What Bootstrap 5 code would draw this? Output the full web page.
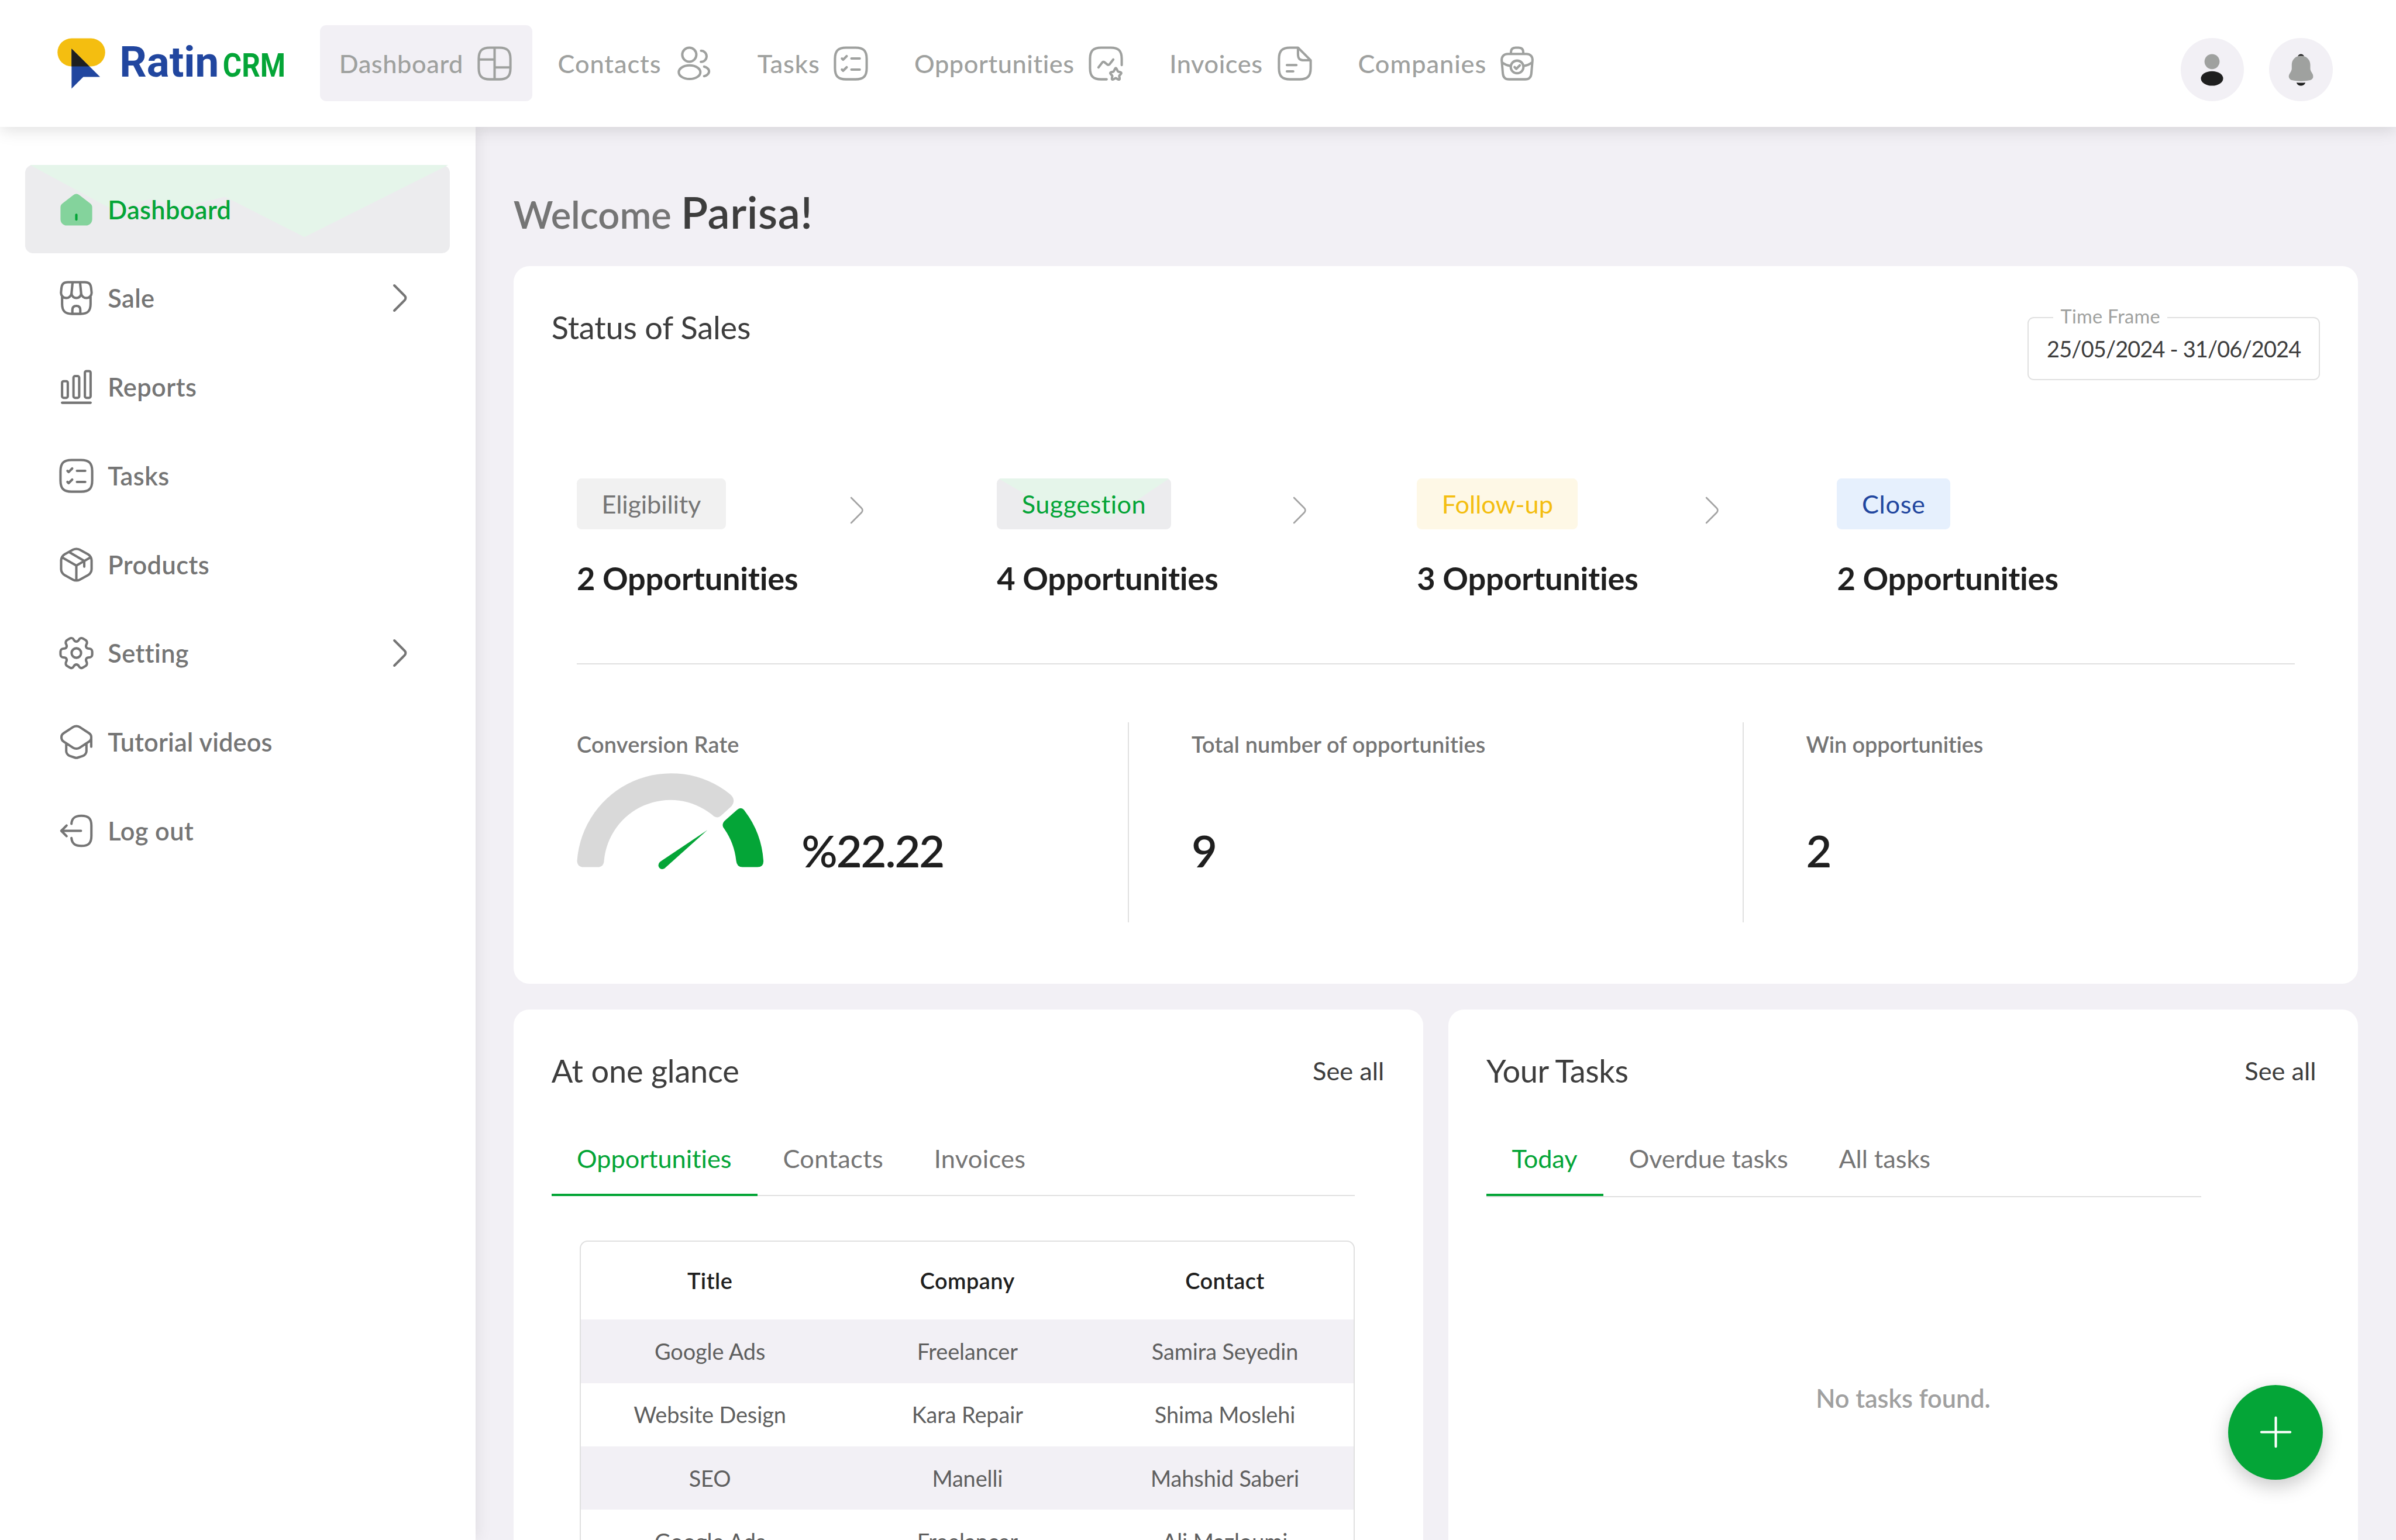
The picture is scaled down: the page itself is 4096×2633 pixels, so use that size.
<!DOCTYPE html>
<html lang="en">
<head>
<meta charset="utf-8">
<title>Ratin CRM</title>
<meta name="viewport" content="width=device-width, initial-scale=1">
<link rel="stylesheet" href="https://cdn.jsdelivr.net/npm/bootstrap@5.3.0/dist/css/bootstrap.min.css">
<style>
/* One design unit is 1/1512 of the window width; 1rem is 16 units. */
:root { --u: calc(100vw / 1512); --green: #04a537; --line: #e0e0e0; --page: #f2f0f5; --grey: #757575; --soft: #9fa19f; --ink: #3d3d3d; --dark: #1f1f1f; font-size: calc(100vw / 94.5); }
body { font-family: Lato, sans-serif; font-variant-ligatures: none; background: var(--page); height: 100vh; overflow: hidden; color: var(--ink); line-height: 1.5; }
svg { display: block; flex: none; }
.ico { width: 1.5rem; height: 1.5rem; fill: none; stroke: currentColor; stroke-width: 1.5; stroke-linecap: round; stroke-linejoin: round; }
.ico-solid { stroke: none; }

.topbar { height: calc(80 * var(--u)); background: #fff; box-shadow: 0 calc(2 * var(--u)) calc(10 * var(--u)) rgba(0,0,0,.13); z-index: 5; padding-left: calc(36 * var(--u)); padding-right: calc(40 * var(--u)); }
.brand { width: calc(166 * var(--u)); height: calc(80 * var(--u)); }
.brand text { font-family: Roboto, sans-serif; font-weight: 700; }
.topnav { gap: calc(4 * var(--u)); }
.topnav .nav-link { height: calc(48 * var(--u)); padding: 0 calc(12 * var(--u)); color: var(--soft); border-radius: calc(4 * var(--u)); letter-spacing: .013em; font-weight: 500; white-space: nowrap; }
.topnav .nav-link.active { background: var(--page); }
.w-dash { width: calc(134 * var(--u)); }
.w-cont { width: calc(122 * var(--u)); }
.w-task { width: calc(95 * var(--u)); }
.w-opp { width: calc(157 * var(--u)); }
.w-inv { width: calc(115 * var(--u)); }
.w-comp { width: calc(136.4 * var(--u)); }
.topnav .nav-link.w-cont, .topnav .nav-link.w-task, .topnav .nav-link.w-comp { letter-spacing: .021em; }
.round-btn { width: calc(40 * var(--u)); height: calc(40 * var(--u)); background: var(--page); margin-top: calc(8 * var(--u)); }

.side { width: calc(300 * var(--u)); background: #fff; padding: calc(24 * var(--u)) calc(16 * var(--u)); box-shadow: calc(1 * var(--u)) 0 calc(9 * var(--u)) rgba(0,0,0,.08); z-index: 2; }
.side .nav-link { height: calc(56 * var(--u)); padding: calc(.5 * var(--u)) calc(20 * var(--u)) 0; color: #757575; font-weight: 600; border-radius: calc(5 * var(--u)); letter-spacing: .01em; isolation: isolate; }
.side .nav-link.active { color: var(--green); background: #ececee; letter-spacing: .008em; }
.side .peaks { left: 0; top: 0; width: 100%; height: 100%; z-index: -1; fill: #e5f5ea; }
.side .lbl { margin-left: calc(8 * var(--u)); }
.side .lbl-long { letter-spacing: .003em; }

.page { padding: 0 calc(24 * var(--u)); height: calc(100vh - 80 * var(--u)); overflow: hidden; }
.hello { height: calc(88 * var(--u)); padding-top: calc(35.5 * var(--u)); line-height: calc(36 * var(--u)); font-size: calc(24 * var(--u)); font-weight: 600; color: var(--grey); letter-spacing: -.001em; }
.hello b { font-size: calc(28 * var(--u)); font-weight: 600; color: var(--ink); letter-spacing: .007em; }
.panel { background: #fff; border-radius: calc(10 * var(--u)); border: 0; padding: calc(24 * var(--u)); }
.panel-title { font-size: calc(20 * var(--u)); line-height: calc(28 * var(--u)); font-weight: 400; color: var(--ink); padding-top: calc(.8 * var(--u)); margin-bottom: calc(-.8 * var(--u)); letter-spacing: -.004em; }
.panel-title-r { letter-spacing: -.008em; }
.sales { height: calc(453 * var(--u)); }
.frame { width: calc(184.4 * var(--u)); height: calc(40 * var(--u)); margin-top: calc(8 * var(--u)); border: var(--u) solid var(--line); border-radius: calc(4 * var(--u)); font-size: calc(14 * var(--u)); letter-spacing: -.0225em; white-space: nowrap; padding-top: calc(1 * var(--u)); }
.frame .cap { left: calc(15.5 * var(--u)); top: calc(-9 * var(--u)); padding: 0 calc(4.5 * var(--u)); background: #fff; color: var(--soft); font-size: calc(12 * var(--u)); line-height: calc(16 * var(--u)); letter-spacing: .008em; }
.funnel { margin: calc(62 * var(--u)) calc(16 * var(--u)) 0; height: calc(76 * var(--u)); }
.stage { width: calc(265.1 * var(--u)); }
.pill { height: calc(32 * var(--u)); line-height: calc(32.4 * var(--u)); padding: 0 calc(15.7 * var(--u)); border-radius: calc(3 * var(--u)); isolation: isolate; display: inline-block; vertical-align: top; }
.pill-e { background: #f1f1f1; color: var(--grey); letter-spacing: -.004em; }
.pill-s { background: #ececee; color: var(--green); letter-spacing: .01em; }
.pill-f { background: #fef8e6; color: #f4be10; letter-spacing: -.001em; }
.pill-c { background: #e6f0fd; color: #21469f; letter-spacing: .015em; }
.pill svg { left: 0; top: 0; width: 100%; height: 100%; z-index: -1; fill: #e5f5ea; }
.stage-n { font-size: calc(20 * var(--u)); line-height: calc(28 * var(--u)); font-weight: 700; color: var(--dark); margin-top: calc(17 * var(--u)); letter-spacing: -.005em; white-space: nowrap; }
.step { stroke-width: 1; color: #a3a3a3; margin-top: calc(8 * var(--u)); }
.step-1 { margin-right: calc(77 * var(--u)); }
.step-2 { margin-right: calc(62.5 * var(--u)); }
.step-3 { margin-right: calc(67.4 * var(--u)); }
.rule { height: var(--u); background: var(--line); margin: calc(40.5 * var(--u)) calc(16 * var(--u)) calc(36.5 * var(--u)); }
.stats { margin: 0 calc(16 * var(--u)); height: calc(126 * var(--u)); }
.stat { flex: none; width: calc(387.8 * var(--u)); padding-top: calc(4 * var(--u)); padding-left: calc(39.4 * var(--u)); border-left: var(--u) solid var(--line); }
.stat-first { width: calc(347.8 * var(--u)); padding-left: 0; border-left: 0; }
.stat-last { width: calc(348 * var(--u)); }
.stat-l { font-size: calc(14 * var(--u)); line-height: calc(20 * var(--u)); font-weight: 600; color: var(--grey); letter-spacing: .004em; white-space: nowrap; }
.stat-last .stat-l { letter-spacing: -.004em; }
.stat-v { font-size: calc(28 * var(--u)); line-height: calc(36 * var(--u)); font-weight: 600; color: var(--dark); padding-top: calc(38.8 * var(--u)); }
.rate { margin-left: calc(22.8 * var(--u)); letter-spacing: -.027em; }
.gauge { width: calc(119 * var(--u)); height: calc(62 * var(--u)); margin-top: calc(7.2 * var(--u)); }

.duo { gap: calc(16 * var(--u)); margin-top: calc(16 * var(--u)); }
.duo .panel { flex: 1 1 0; height: calc(335 * var(--u)); overflow: hidden; border-bottom-left-radius: 0; border-bottom-right-radius: 0; padding-bottom: 0; }
.see { color: var(--ink); text-decoration: none; margin-top: calc(2.9 * var(--u)); margin-bottom: calc(-1 * var(--u)); margin-right: calc(.5 * var(--u)); line-height: calc(24 * var(--u)); }
.see-r { margin-right: calc(2.4 * var(--u)); }
.tabs { width: calc(507 * var(--u)); margin-top: calc(17.8 * var(--u)); border-bottom: var(--u) solid var(--line); }
.tabs .nav-link { padding: calc(12.3 * var(--u)) calc(16 * var(--u)) calc(10.4 * var(--u)); line-height: calc(24 * var(--u)); color: var(--grey); border-bottom: calc(1.5 * var(--u)) solid transparent; border-radius: 0; letter-spacing: .007em; margin-bottom: calc(-1 * var(--u)); white-space: nowrap; }
.tabs .nav-link.active { color: var(--green); border-color: var(--green); letter-spacing: -.001em; padding-right: calc(16.5 * var(--u)); }
.tabs-low { width: calc(451 * var(--u)); }
.tabs-low .nav-link { margin-bottom: 0; letter-spacing: -.002em; }
.tabs-low .nav-link.active { padding-right: calc(16.5 * var(--u)); }
.deals { width: calc(489 * var(--u)); margin: calc(28.4 * var(--u)) 0 0 calc(18 * var(--u)); border: var(--u) solid var(--line); border-radius: calc(5 * var(--u)); overflow: hidden; }
.deals table { table-layout: fixed; font-size: calc(14 * var(--u)); line-height: calc(20 * var(--u)); text-align: center; white-space: nowrap; }
.deals th { height: calc(49 * var(--u)); font-weight: 600; color: var(--dark); letter-spacing: .012em; padding: 0; vertical-align: middle; }
.deals td { height: calc(40 * var(--u)); color: #5f5f5f; padding: calc(.6 * var(--u)) 0 0; letter-spacing: -.003em; vertical-align: middle; }
.deals .tint td { background: var(--page); }
.empty { margin-top: calc(114.8 * var(--u)); color: #a0a0a0; font-weight: 600; letter-spacing: -.002em; }
.fab { right: calc(46 * var(--u)); bottom: calc(38 * var(--u)); width: calc(60 * var(--u)); height: calc(60 * var(--u)); background: var(--green); color: #fff; box-shadow: 0 calc(4 * var(--u)) calc(12 * var(--u)) rgba(0,0,0,.22); z-index: 6; }
</style>
</head>
<body class="d-flex flex-column">

<header class="topbar d-flex align-items-center position-relative flex-shrink-0">
  <svg class="brand" viewBox="36 0 166 80" role="img" aria-label="Ratin CRM">
    <rect x="36.1" y="24.2" width="30.1" height="17.7" rx="8.9" fill="#f4be10"/>
    <path d="M45 30.7L63 48.5H52.4L45 55.9Z" fill="#21469f"/>
    <path d="M45 30.7L56.2 41.9H45Z" fill="#1f1f1f"/>
    <text x="75.2" y="48.5" font-size="26.4" textLength="62.8" lengthAdjust="spacingAndGlyphs" fill="#21469f">Ratin</text>
    <text x="140.4" y="48.5" font-size="20.5" textLength="39.6" lengthAdjust="spacingAndGlyphs" fill="#04a537">CRM</text>
  </svg>
  <nav class="nav topnav flex-nowrap">
    <a class="nav-link active w-dash d-flex align-items-center justify-content-between" href="#"><span>Dashboard</span>
      <svg class="ico" viewBox="0 0 24 24"><path d="M9 22H15C20 22 22 20 22 15V9C22 4 20 2 15 2H9C4 2 2 4 2 9V15C2 20 4 22 9 22ZM12 2V22M2 9.5H12M12 14.5H22"/></svg></a>
    <a class="nav-link w-cont d-flex align-items-center justify-content-between" href="#"><span>Contacts</span>
      <svg class="ico" viewBox="0 0 24 24"><path d="M9.16 10.87C9.06 10.86 8.94 10.86 8.83 10.87C6.45 10.79 4.56 8.84 4.56 6.44C4.56 3.99 6.54 2 9 2C11.45 2 13.44 3.99 13.44 6.44C13.43 8.84 11.54 10.79 9.16 10.87ZM16.41 4C18.35 4 19.91 5.57 19.91 7.5C19.91 9.39 18.41 10.93 16.54 11C16.46 10.99 16.37 10.99 16.28 11M4.16 14.56C1.74 16.18 1.74 18.82 4.16 20.43C6.91 22.27 11.42 22.27 14.17 20.43C16.59 18.81 16.59 16.17 14.17 14.56C11.43 12.73 6.92 12.73 4.16 14.56ZM18.34 20C19.06 19.85 19.74 19.56 20.3 19.13C21.86 17.96 21.86 16.03 20.3 14.86C19.75 14.44 19.08 14.16 18.37 14"/></svg></a>
    <a class="nav-link w-task d-flex align-items-center justify-content-between" href="#"><span>Tasks</span>
      <svg class="ico" viewBox="0 0 24 24"><path d="M9 22H15C20 22 22 20 22 15V9C22 4 20 2 15 2H9C4 2 2 4 2 9V15C2 20 4 22 9 22ZM12.37 8.88H17.62M6.38 8.88L7.13 9.63L9.38 7.38M12.37 15.88H17.62M6.38 15.88L7.13 16.63L9.38 14.38"/></svg></a>
    <a class="nav-link w-opp d-flex align-items-center justify-content-between" href="#"><span>Opportunities</span>
      <svg class="ico" viewBox="0 0 24 24"><path d="M22 13V9C22 4 20 2 15 2H9C4 2 2 4 2 9V15C2 20 4 22 9 22H12.5M7.33 14.49L9.71 11.4C10.05 10.96 10.68 10.88 11.12 11.22L12.95 12.66C13.39 13 14.02 12.92 14.36 12.49L16.67 9.51M18.78 15.44L19.48 16.85C19.58 17.04 19.83 17.23 20.04 17.26L21 17.42C21.8 17.56 22 18.16 21.4 18.75L20.6 19.55C20.47 19.68 20.39 19.95 20.43 20.13L20.66 21.1C20.88 22.05 20.37 22.42 19.53 21.92L18.6 21.37C18.4 21.27 18.07 21.27 17.87 21.37L16.97 21.92C16.12 22.42 15.6 22.05 15.82 21.1L16.05 20.13C16.1 19.95 16.02 19.68 15.89 19.55L15.09 18.75C14.5 18.16 14.69 17.56 15.51 17.42L16.5 17.26C16.68 17.23 16.92 17.04 17.01 16.85L17.72 15.44C18.05 14.74 18.45 14.74 18.78 15.44Z"/></svg></a>
    <a class="nav-link w-inv d-flex align-items-center justify-content-between" href="#"><span>Invoices</span>
      <svg class="ico" viewBox="0 0 24 24"><path d="M22 10V15C22 20 20 22 15 22H9C4 22 2 20 2 15V9C2 4 4 2 9 2H14M22 10H18C15 10 14 9 14 6V2L22 10ZM7 13H13M7 17H11"/></svg></a>
    <a class="nav-link w-comp d-flex align-items-center justify-content-between" href="#"><span>Companies</span>
      <svg class="ico" viewBox="0 0 24 24"><path d="M6.1 6H17.9C20.4 6 21.9 7.7 21.7 10.2L21 18.2C20.8 20.7 19.6 22 17.1 22H6.9C4.4 22 3.2 20.7 3 18.2L2.3 10.2C2.1 7.7 3.6 6 6.1 6ZM8.1 6V5C8.1 3 9 2 11 2H13C15 2 15.9 3 15.9 5V6M2.6 11.4C4.1 12.5 5.8 13.3 7.9 13.6M21.4 11.4C19.9 12.5 18.2 13.3 16.1 13.6M10.4 14.3L11.5 15.4L13.7 13.2"/><circle cx="12" cy="14.2" r="4"/></svg></a>
  </nav>
  <div class="d-flex gap-3 ms-auto">
    <div class="round-btn rounded-circle d-flex align-items-center justify-content-center">
      <svg class="ico ico-solid" viewBox="0 0 24 24"><circle cx="12" cy="6.75" r="4.75" fill="#9fa19f"/><ellipse cx="12" cy="17.4" rx="7" ry="4.6" fill="#1f1f1f"/></svg>
    </div>
    <div class="round-btn rounded-circle d-flex align-items-center justify-content-center">
      <svg class="ico ico-solid" viewBox="0 0 24 24"><path d="M10 3.4C10.3 2.5 11.1 2 12 2S13.7 2.5 14 3.4Z" fill="#1f1f1f"/><path d="M19.3 14.5L18.3 12.8C18.1 12.4 17.9 11.7 17.9 11.3V8.7C17.9 5.5 15.3 3 12 3S6.2 5.5 6.2 8.7V11.3C6.2 11.7 6 12.4 5.8 12.8L4.8 14.5C4.3 15.3 4.2 16.2 4.5 17C4.8 17.7 5.4 18.3 6.2 18.5C8.1 19 10 19.1 12 19.1S15.9 19 17.8 18.5C18.6 18.3 19.3 17.7 19.6 17C19.8 16.1 19.7 15.2 19.3 14.5Z" fill="#9fa19f"/><path d="M14.8 20C14.4 21.2 13.3 22 12 22S9.6 21.2 9.2 20C11 20.2 13 20.2 14.8 20Z" fill="#1f1f1f"/></svg>
    </div>
  </div>
</header>

<div class="d-flex flex-grow-1">
  <aside class="side flex-shrink-0 position-relative">
    <nav class="nav flex-column">
      <a class="nav-link active d-flex align-items-center position-relative" href="#">
        <svg class="peaks position-absolute" viewBox="0 0 268 56" preserveAspectRatio="none"><path d="M3 0L52 26.5C56 28 62 27 66 25L79 21.5L98 27L126 20L176.3 45.5L267 0Z"/></svg>
        <svg class="ico" viewBox="0 0 24 24"><path d="M12 2C11.3 2 10.7 2.3 10.1 2.8L3.4 7.9C2.5 8.6 2 9.4 2 10.4V18C2 20.3 3.7 22 6 22H18C20.3 22 22 20.3 22 18V10.4C22 9.4 21.5 8.6 20.6 7.9L13.9 2.8C13.3 2.3 12.7 2 12 2Z" fill="#84d39c" stroke="none"/><path d="M12 15.2V18.2"/></svg>
        <span class="lbl">Dashboard</span></a>
      <a class="nav-link d-flex align-items-center" href="#">
        <svg class="ico" viewBox="0 0 24 24"><path d="M3.01 11.22V15.71C3.01 20.2 4.81 22 9.3 22H14.69C19.18 22 20.98 20.2 20.98 15.71V11.22M12 12C13.83 12 15.18 10.51 15 8.68L14.34 2H9.67L9 8.68C8.82 10.51 10.17 12 12 12ZM18.31 12C20.33 12 21.81 10.36 21.61 8.35L21.33 5.6C20.97 3 19.97 2 17.35 2H14.3L15 9.01C15.17 10.66 16.66 12 18.31 12ZM5.64 12C7.29 12 8.78 10.66 8.94 9.01L9.64 2H6.59C3.97 2 2.97 3 2.61 5.6L2.34 8.35C2.14 10.36 3.62 12 5.64 12ZM12 17C10.33 17 9.5 17.83 9.5 19.5V22H14.5V19.5C14.5 17.83 13.67 17 12 17Z"/></svg>
        <span class="lbl">Sale</span>
        <svg class="ico ms-auto" viewBox="0 0 24 24"><path d="M8.91 19.92L15.43 13.4C16.2 12.63 16.2 11.37 15.43 10.6L8.91 4.08"/></svg></a>
      <a class="nav-link d-flex align-items-center" href="#">
        <svg class="ico" viewBox="0 0 24 24"><path d="M3 22H21"/><rect x="3" y="8.4" width="3.6" height="10.5" rx="1"/><rect x="10.2" y="5.2" width="3.6" height="13.7" rx="1"/><rect x="17.4" y="2" width="3.6" height="16.9" rx="1"/></svg>
        <span class="lbl">Reports</span></a>
      <a class="nav-link d-flex align-items-center" href="#">
        <svg class="ico" viewBox="0 0 24 24"><path d="M9 22H15C20 22 22 20 22 15V9C22 4 20 2 15 2H9C4 2 2 4 2 9V15C2 20 4 22 9 22ZM12.37 8.88H17.62M6.38 8.88L7.13 9.63L9.38 7.38M12.37 15.88H17.62M6.38 15.88L7.13 16.63L9.38 14.38"/></svg>
        <span class="lbl">Tasks</span></a>
      <a class="nav-link d-flex align-items-center" href="#">
        <svg class="ico" viewBox="0 0 24 24"><path d="M3.17 7.44L12 12.55L20.77 7.47M12 21.61V12.54M9.93 2.48L4.59 5.44C3.38 6.11 2.39 7.79 2.39 9.17V14.82C2.39 16.2 3.38 17.88 4.59 18.55L9.93 21.52C11.07 22.15 12.94 22.15 14.08 21.52L19.42 18.55C20.63 17.88 21.62 16.2 21.62 14.82V9.17C21.62 7.79 20.63 6.11 19.42 5.44L14.08 2.47C12.93 1.84 11.07 1.84 9.93 2.48ZM17 13.24V9.58L7.51 4.1"/></svg>
        <span class="lbl">Products</span></a>
      <a class="nav-link d-flex align-items-center" href="#">
        <svg class="ico" viewBox="0 0 24 24"><circle cx="12" cy="12" r="3"/><path d="M2 12.88V11.12C2 10.08 2.85 9.22 3.9 9.22C5.71 9.22 6.45 7.94 5.54 6.37C5.02 5.47 5.33 4.3 6.24 3.78L7.97 2.79C8.76 2.32 9.78 2.6 10.25 3.39L10.36 3.58C11.26 5.15 12.74 5.15 13.65 3.58L13.76 3.39C14.23 2.6 15.25 2.32 16.04 2.79L17.77 3.78C18.68 4.3 18.99 5.47 18.47 6.37C17.56 7.94 18.3 9.22 20.11 9.22C21.15 9.22 22.01 10.07 22.01 11.12V12.88C22.01 13.92 21.16 14.78 20.11 14.78C18.3 14.78 17.56 16.06 18.47 17.63C18.99 18.54 18.68 19.7 17.77 20.22L16.04 21.21C15.25 21.68 14.23 21.4 13.76 20.61L13.65 20.42C12.75 18.85 11.27 18.85 10.36 20.42L10.25 20.61C9.78 21.4 8.76 21.68 7.97 21.21L6.24 20.22C5.33 19.7 5.02 18.53 5.54 17.63C6.45 16.06 5.71 14.78 3.9 14.78C2.85 14.78 2 13.92 2 12.88Z"/></svg>
        <span class="lbl">Setting</span>
        <svg class="ico ms-auto" viewBox="0 0 24 24"><path d="M8.91 19.92L15.43 13.4C16.2 12.63 16.2 11.37 15.43 10.6L8.91 4.08"/></svg></a>
      <a class="nav-link d-flex align-items-center" href="#">
        <svg class="ico" viewBox="0 0 24 24"><path d="M10.05 2.53L4.03 6.46C2.1 7.72 2.1 10.54 4.03 11.8L10.05 15.73C11.13 16.44 12.91 16.44 13.99 15.73L19.98 11.8C21.9 10.54 21.9 7.73 19.98 6.47L13.99 2.54C12.91 1.82 11.13 1.82 10.05 2.53ZM5.63 13.08L5.62 17.77C5.62 19.04 6.6 20.4 7.8 20.8L10.99 21.86C11.54 22.04 12.45 22.04 13.01 21.86L16.2 20.8C17.4 20.4 18.38 19.04 18.38 17.77V13.13M21.4 15V9"/></svg>
        <span class="lbl lbl-long">Tutorial videos</span></a>
      <a class="nav-link d-flex align-items-center" href="#">
        <svg class="ico" viewBox="0 0 24 24"><path d="M8.9 7.56C9.21 3.96 11.06 2.49 15.11 2.49H15.24C19.71 2.49 21.5 4.28 21.5 8.75V15.27C21.5 19.74 19.71 21.53 15.24 21.53H15.11C11.09 21.53 9.24 20.08 8.91 16.54M14.9 12H2.6M5.85 8.65L2.5 12L5.85 15.35"/></svg>
        <span class="lbl">Log out</span></a>
    </nav>
  </aside>

  <main class="page flex-grow-1">
    <h1 class="hello mb-0">Welcome <b>Parisa!</b></h1>

    <section class="panel sales">
      <div class="d-flex justify-content-between">
        <h2 class="panel-title">Status of Sales</h2>
        <div class="frame position-relative d-flex align-items-center justify-content-center">
          <span class="cap position-absolute">Time Frame</span>25/05/2024 - 31/06/2024
        </div>
      </div>

      <div class="funnel d-flex">
        <div class="stage d-flex justify-content-between">
          <div><span class="pill pill-e">Eligibility</span><div class="stage-n">2 Opportunities</div></div>
          <svg class="ico step step-1" viewBox="0 0 24 24"><path d="M8.91 19.92L15.43 13.4C16.2 12.63 16.2 11.37 15.43 10.6L8.91 4.08"/></svg>
        </div>
        <div class="stage d-flex justify-content-between">
          <div><span class="pill pill-s position-relative overflow-hidden"><svg class="position-absolute" viewBox="0 0 110 32" preserveAspectRatio="none"><path d="M1 0L30 17L72 25L109 0Z"/></svg>Suggestion</span><div class="stage-n">4 Opportunities</div></div>
          <svg class="ico step step-2" viewBox="0 0 24 24"><path d="M8.91 19.92L15.43 13.4C16.2 12.63 16.2 11.37 15.43 10.6L8.91 4.08"/></svg>
        </div>
        <div class="stage d-flex justify-content-between">
          <div><span class="pill pill-f">Follow-up</span><div class="stage-n">3 Opportunities</div></div>
          <svg class="ico step step-3" viewBox="0 0 24 24"><path d="M8.91 19.92L15.43 13.4C16.2 12.63 16.2 11.37 15.43 10.6L8.91 4.08"/></svg>
        </div>
        <div><span class="pill pill-c">Close</span><div class="stage-n">2 Opportunities</div></div>
      </div>

      <div class="rule"></div>

      <div class="stats d-flex">
        <div class="stat stat-first">
          <div class="stat-l">Conversion Rate</div>
          <div class="d-flex align-items-start">
            <svg class="gauge" viewBox="0 0 119 62">
              <path fill="#d9d9d9" d="M.2 56Q.3 60 4.5 60H13Q17 60 17.2 56A42 42 0 0 1 85.2 26.8Q88.3 30 91.1 27.5L97.6 21.6Q100.8 17.6 96.8 14A59.4 59.4 0 0 0 .2 56Z"/>
              <path fill="#04a537" d="M106.2 24.8Q104 21.3 101.2 23.8L94.2 30Q90.5 33 93.2 36Q99.4 45 100.6 56Q101 60 104.6 60H114Q118 60 117.8 56Q116.6 38.5 106.2 24.8Z"/>
              <path fill="#04a537" d="M82.4 36.6L53.2 56.2Q51 57.7 51.7 59.8Q53 62.2 55.4 60.8Z"/>
            </svg>
            <div class="stat-v rate">%22.22</div>
          </div>
        </div>
        <div class="stat">
          <div class="stat-l">Total number of opportunities</div>
          <div class="stat-v">9</div>
        </div>
        <div class="stat stat-last">
          <div class="stat-l">Win opportunities</div>
          <div class="stat-v">2</div>
        </div>
      </div>
    </section>

    <div class="duo d-flex">
      <section class="panel">
        <div class="d-flex justify-content-between align-items-start">
          <h2 class="panel-title">At one glance</h2>
          <a class="see" href="#">See all</a>
        </div>
        <nav class="nav tabs flex-nowrap">
          <a class="nav-link active" href="#">Opportunities</a>
          <a class="nav-link" href="#">Contacts</a>
          <a class="nav-link" href="#">Invoices</a>
        </nav>
        <div class="deals">
          <table class="table table-borderless mb-0">
            <thead><tr><th>Title</th><th>Company</th><th>Contact</th></tr></thead>
            <tbody>
              <tr class="tint"><td>Google Ads</td><td>Freelancer</td><td>Samira Seyedin</td></tr>
              <tr><td>Website Design</td><td>Kara Repair</td><td>Shima Moslehi</td></tr>
              <tr class="tint"><td>SEO</td><td>Manelli</td><td>Mahshid Saberi</td></tr>
              <tr><td>Google Ads</td><td>Freelancer</td><td>Ali Mazloumi</td></tr>
            </tbody>
          </table>
        </div>
      </section>

      <section class="panel">
        <div class="d-flex justify-content-between align-items-start">
          <h2 class="panel-title panel-title-r">Your Tasks</h2>
          <a class="see see-r" href="#">See all</a>
        </div>
        <nav class="nav tabs tabs-low flex-nowrap">
          <a class="nav-link active" href="#">Today</a>
          <a class="nav-link" href="#">Overdue tasks</a>
          <a class="nav-link" href="#">All tasks</a>
        </nav>
        <div class="empty text-center">No tasks found.</div>
      </section>
    </div>
  </main>
</div>

<button class="fab btn rounded-circle position-absolute d-flex align-items-center justify-content-center p-0 border-0" type="button" aria-label="Add">
  <svg class="ico" viewBox="0 0 24 24"><path d="M2.9 12H21.1M12 2.9V21.1"/></svg>
</button>

<script src="https://cdn.jsdelivr.net/npm/bootstrap@5.3.0/dist/js/bootstrap.bundle.min.js"></script>
</body>
</html>
